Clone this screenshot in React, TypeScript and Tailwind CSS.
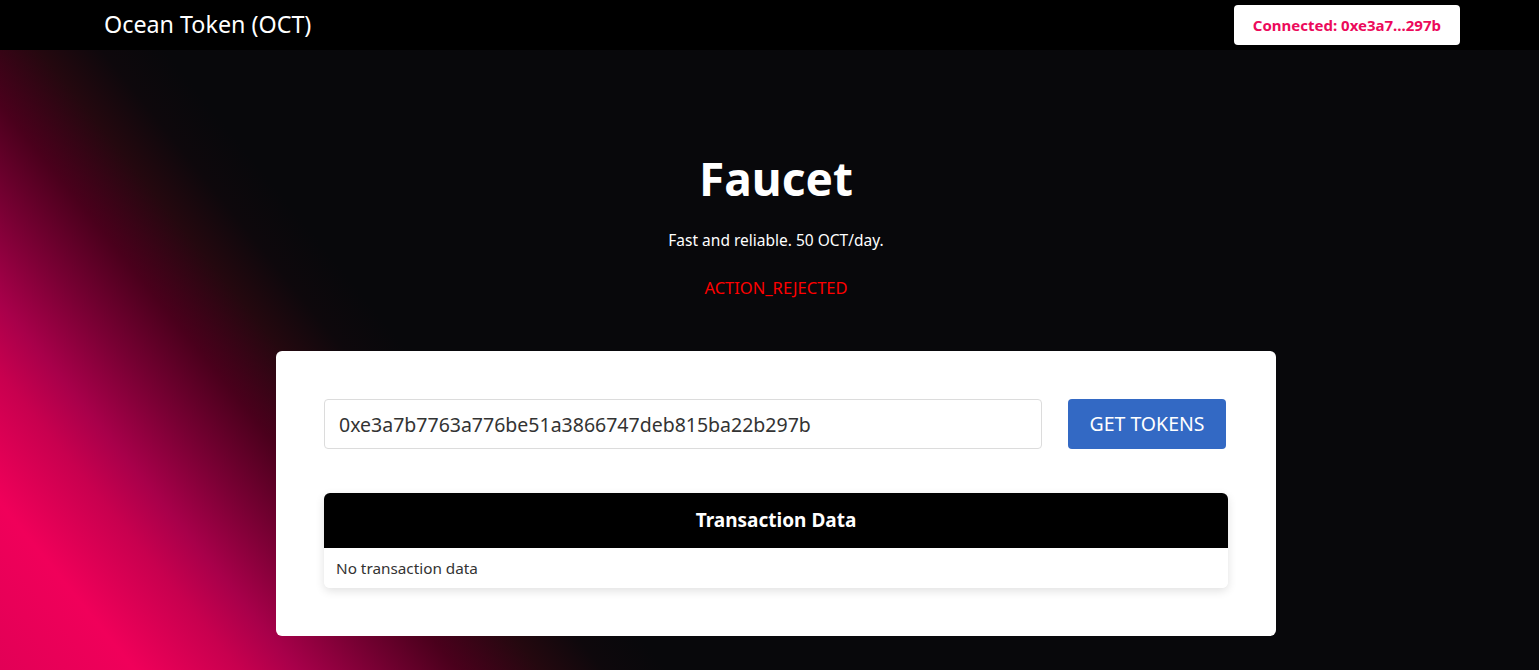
export default function App() {
  const address = '0xe3a7b7763a776be51a3866747deb815ba22b297b'

  return (
    <div
      className="min-h-[670px] bg-[#08080b] font-['Noto_Sans',sans-serif] text-white"
      style={{
        backgroundImage:
          'linear-gradient(51deg, #e20056 0%, #f0005a 6.5%, #e00055 8.5%, #c8004f 11.5%, #a8004a 14.3%, #7a0034 18%, #4a001c 22%, #24080f 26%, #0e080c 29%, #08080b 32%)',
      }}
    >
      <nav className="flex h-[50px] items-center justify-between bg-black pl-[104px] pr-[79px]">
        <span className="text-[23.3px] leading-none">Ocean Token (OCT)</span>
        <button className="h-[40px] rounded-[4px] bg-white px-[19px] text-[15px] font-bold text-[#ec0a5b]">
          Connected: 0xe3a7...297b
        </button>
      </nav>

      <main className="ml-[276px] w-[1000px] pb-[34px] pt-[98px]">
        <div className="text-center">
          <h1 className="text-[46px] font-bold leading-[60px]">Faucet</h1>
          <p className="mt-[21px] text-[15.5px]">Fast and reliable. 50 OCT/day.</p>
          <p className="mt-[24px] text-[16.5px] text-[#ff0000]">ACTION_REJECTED</p>
        </div>

        <div className="mt-[50px] rounded-[6px] bg-white px-[48px] pb-[48px] pt-[48px]">
          <div className="mr-[2px] flex gap-[26px]">
            <input
              readOnly
              value={address}
              className="h-[50px] flex-1 rounded-[4px] border border-[#dcdcdc] px-[14px] text-[19.5px] text-[#333] outline-none"
            />
            <button className="h-[50px] w-[158px] rounded-[4px] bg-[#3369c4] text-[19.5px] text-white">
              GET TOKENS
            </button>
          </div>

          <div className="mt-[44px] overflow-hidden rounded-[6px] shadow-[0_3px_10px_rgba(0,0,0,0.12)]">
            <div className="flex h-[55px] items-center justify-center bg-black text-[19px] font-bold text-white">
              Transaction Data
            </div>
            <div className="flex h-[40px] items-center bg-white px-[12px] text-[15.3px] text-[#333]">
              No transaction data
            </div>
          </div>
        </div>
      </main>
    </div>
  )
}
